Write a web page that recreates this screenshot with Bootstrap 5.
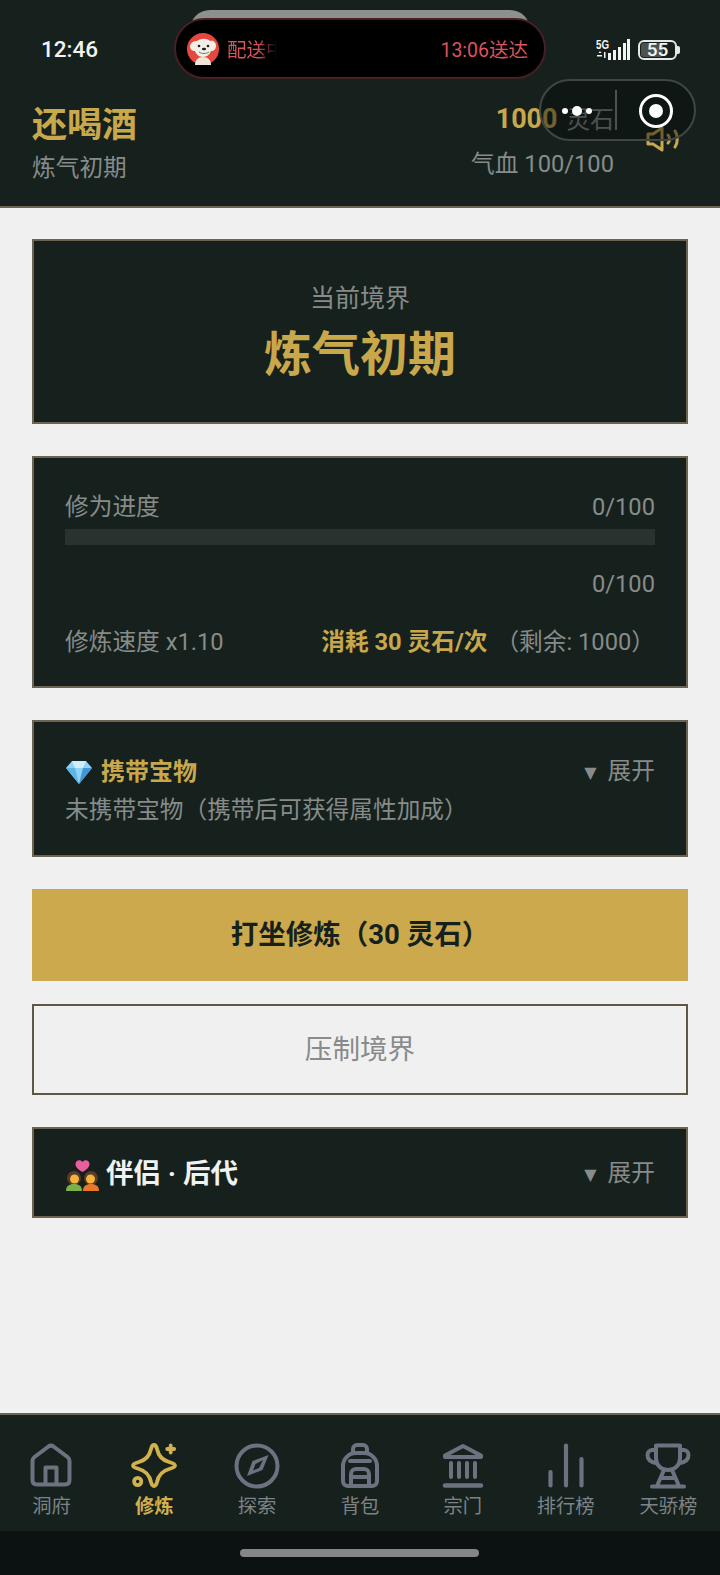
<!DOCTYPE html>
<html lang="zh">
<head>
<meta charset="utf-8">
<title>修炼</title>
<link rel="stylesheet" href="https://cdn.jsdelivr.net/npm/bootstrap@5.3.0/dist/css/bootstrap.min.css">
<style>
html,body{height:100%}
body{width:720px;height:1575px;overflow:hidden;background:#f0f0f0;font-family:Roboto,"Noto Sans CJK SC",sans-serif;color:#878b89}
.shell{height:1575px;position:relative}
.topbar{background:#16211e;border-bottom:2px solid #6b6450;height:208px;padding:0 40px 0 32px;position:relative}
.statusrow{height:99px;padding:0 0 0 9px}
.clock{color:#f2f4f3;font-size:22.5px;font-weight:500;line-height:1}
.batt{width:39px;height:20px;border:2px solid #e6e8e7;border-radius:6px;position:relative;color:#f2f4f3;font-size:19px;line-height:16px;text-align:center;font-weight:500;margin-right:3px}
.batt::before{content:"";position:absolute;left:1px;top:1px;bottom:1px;width:22px;background:#4b5250;border-radius:3px;z-index:0}
.batt::after{content:"";position:absolute;right:-5px;top:4px;width:3px;height:8px;background:#e6e8e7;border-radius:0 2px 2px 0}
.batt b{position:relative;z-index:1;font-weight:500}
.island-back{position:absolute;left:190px;top:10px;width:340px;height:40px;border-radius:20px 20px 0 0;background:#8d908e}
.island{position:absolute;left:174px;top:18px;width:372px;height:61px;background:#000;border:2px solid #4a1f24;border-radius:31px;padding:0 16px 0 11px;color:#d9545b;font-size:19.5px;line-height:1}
.island-txt{padding-top:5px}
.island-fade{white-space:nowrap;padding-top:5px;-webkit-mask-image:linear-gradient(90deg,#000 30px,transparent 50px);mask-image:linear-gradient(90deg,#000 30px,transparent 50px)}
.capsule{position:absolute;left:539px;top:79px;width:157px;height:62px;border-radius:31px;background:rgba(6,10,10,.45);border:2px solid #3f4645}
.capsule-line{width:2px;height:40px;background:#4c5251;position:absolute;left:74px;top:9px}
.who{font-size:35px;font-weight:700;color:#c9a84c;line-height:1.2;margin-top:6px}
.realm{font-size:23.7px;line-height:1.3;margin-top:6px}
.wealth{padding-top:3px;text-align:right}
.stone{font-size:27px;font-weight:700;color:#c9a84c;line-height:1.3}
.stone span{font-size:23.7px;font-weight:400;color:#878b89;margin-left:9px}
.hp{font-size:23.7px;line-height:1.3;margin-top:12px}
.horn{margin:27px 0 0 32px;flex:none}
.stage{padding:31px 32px 0;gap:32px}
.dark-panel{background:#16211e;border:2px solid #6b6450;border-radius:0}
.p-realm{height:185px;padding-top:6px}
.p-realm .lbl{font-size:25px;line-height:1.3}
.p-realm .big{font-size:48px;font-weight:700;color:#c9a84c;line-height:1.3;margin-top:9px}
.p-prog{height:232px;padding:32px 31px 0}
.t25{font-size:23.7px;line-height:34px}
.pb-track{height:16px;background:#28322f;margin-top:5px}
.sp-a{margin-top:22px}
.sp-b{margin-top:24px}
.spent{color:#c9a84c;font-weight:700}
.p-item{height:137px;padding:32px 31px 0}
.p-item .ttl{color:#c9a84c;font-weight:700;font-size:24px;line-height:34px}
.gap-desc{margin-top:3px}
.arrow{font-family:"DejaVu Sans",sans-serif;font-size:16px;margin-right:11px;vertical-align:1px}
.mbtn{height:92px;background:#cba94c;border:0;border-radius:0;color:#16211e;font-size:27.5px;font-weight:700;display:flex;align-items:center;justify-content:center;width:100%}
.mbtn:hover,.mbtn:active{background:#cba94c!important;color:#16211e!important}
.obtn{height:91px;background:transparent;border:2px solid #5d5745;border-radius:0;color:#878b89;font-size:27.6px;display:flex;align-items:center;justify-content:center;width:100%;margin-top:-9px}
.p-mate{height:91px;padding:3px 31px 0}
.mate{color:#f0f2f1;font-size:27.5px;font-weight:700;gap:6px}
.tabs{position:absolute;left:0;right:0;top:1413px;height:118px;background:#16211e;border-top:2px solid #6b6450}
.tabbar{padding-top:28px}
.tabit{width:102.857px;color:#7d8386;font-size:19.3px;line-height:24px}
.tabit svg{display:block;margin-bottom:6px}
.tabit.on{color:#d2b04c;font-weight:700}
.homebar{position:absolute;left:0;right:0;top:1531px;height:44px;background:#0b1211}
.homebar i{display:block;position:absolute;left:240px;top:18px;width:239px;height:8px;background:#858786;border-radius:4px}
</style>
</head>
<body>
<div class="shell">
  <header class="topbar">
    <div class="statusrow d-flex align-items-center justify-content-between">
      <span class="clock">12:46</span>
      <div class="d-flex align-items-center gap-2">
        <svg width="34" height="22" viewBox="0 0 34 22" fill="#f2f4f3">
          <text x="0" y="10" font-family="Liberation Sans" font-weight="700" font-size="12" textLength="13" lengthAdjust="spacingAndGlyphs">5G</text>
          <path d="M1 16h5v1.500H1zM4 12l1.500 2h-3zM8 13v6h1.500v-6z"/>
          <rect x="12" y="14" width="3" height="7"/><rect x="17" y="11" width="3" height="10"/><rect x="22" y="8" width="3" height="13"/><rect x="27" y="4" width="3" height="17"/><rect x="31" y="0" width="3" height="21"/>
        </svg>
        <div class="batt"><b>55</b></div>
      </div>
    </div>
    <div class="d-flex justify-content-between">
      <div>
        <div class="who">还喝酒</div>
        <div class="realm">炼气初期</div>
      </div>
      <div class="d-flex align-items-start">
        <div class="wealth">
          <div class="stone">1000<span>灵石</span></div>
          <div class="hp">气血 100/100</div>
        </div>
        <svg class="horn" width="34" height="26" viewBox="0 0 34 26" fill="none" stroke="#c9a84c" stroke-width="3" stroke-linecap="round" stroke-linejoin="round">
          <path d="M2 8h5l9-6v22l-9-6H2z"/><path d="M22 9c2 2 2 6 0 8"/><path d="M29 5c3 4 3 12 0 16"/>
        </svg>
      </div>
    </div>
    <div class="island-back"></div>
    <div class="island d-flex align-items-center justify-content-between">
      <div class="d-flex align-items-center gap-2">
        <svg width="32" height="32" viewBox="0 0 32 32"><circle cx="16" cy="16" r="16" fill="#e6483d"/><path d="M3 13c1-4 4-5 7-5 4-3 10-3 13 0 3-1 6 1 6 5 0 3-2 5-5 5-1 3-4 6-8 6s-7-3-8-6c-3 0-5-2-5-5z" fill="#f4efe6"/><path d="M8 32c0-5 3-8 8-8s8 3 8 8z" fill="#efe6d8"/><circle cx="12" cy="13" r="1.300" fill="#222"/><circle cx="21" cy="13" r="1.300" fill="#222"/><ellipse cx="17" cy="16" rx="2.200" ry="1.300" fill="#222"/><path d="M12 19c3 2 7 2 10 0" stroke="#3a8f6a" fill="none"/></svg>
        <div class="island-fade">配送中</div>
      </div>
      <div class="island-txt">13:06送达</div>
    </div>
    <div class="capsule">
      <svg class="position-absolute" style="left:18px;top:20px" width="36" height="20" viewBox="0 0 36 20" fill="#fff"><circle cx="6" cy="10" r="3"/><circle cx="18" cy="10" r="5"/><circle cx="30" cy="10" r="3"/></svg>
      <div class="capsule-line"></div>
      <svg class="position-absolute" style="left:97px;top:12px" width="36" height="36" viewBox="0 0 36 36"><circle cx="18" cy="18" r="15.500" fill="none" stroke="#fff" stroke-width="3"/><circle cx="18" cy="18" r="7" fill="#fff"/></svg>
    </div>
  </header>

  <main class="stage d-flex flex-column">
    <section class="dark-panel p-realm d-flex flex-column align-items-center justify-content-center">
      <div class="lbl">当前境界</div>
      <div class="big">炼气初期</div>
    </section>

    <section class="dark-panel p-prog">
      <div class="d-flex justify-content-between t25"><span>修为进度</span><span>0/100</span></div>
      <div class="pb-track"></div>
      <div class="text-end t25 sp-a">0/100</div>
      <div class="d-flex justify-content-between t25 sp-b"><span>修炼速度 x1.10</span><span><span class="spent">消耗 30 灵石/次</span><span class="ms-2">（剩余: 1000）</span></span></div>
    </section>

    <section class="dark-panel p-item">
      <div class="d-flex justify-content-between t25">
        <span class="ttl d-flex align-items-center gap-2">
          <svg width="28" height="26" viewBox="0 0 28 26"><path d="M7 2h14l6 7-13 16L1 9z" fill="#8fd3f4"/><path d="M7 2l3 7h8l3-7z" fill="#cfeefc"/><path d="M1 9h9l4 16z" fill="#5fb4e6"/><path d="M18 9h9l-13 16z" fill="#3f97d8"/></svg>
          携带宝物</span>
        <span><span class="arrow">▼</span>展开</span>
      </div>
      <div class="t25 gap-desc">未携带宝物（携带后可获得属性加成）</div>
    </section>

    <button type="button" class="btn mbtn">打坐修炼（30 灵石）</button>
    <button type="button" class="btn obtn">压制境界</button>

    <section class="dark-panel p-mate d-flex align-items-center justify-content-between">
      <span class="mate d-flex align-items-center">
        <svg width="35" height="34" viewBox="0 0 35 34"><path d="M17.500 15c-5-3-7-5-7-8 0-4 5-5 7-2 2-3 7-2 7 2 0 3-2 5-7 8z" fill="#e6609e"/><circle cx="9" cy="21" r="7" fill="#5b3a26"/><circle cx="26" cy="21" r="7" fill="#5b3a26"/><circle cx="9.500" cy="22" r="4.500" fill="#f3b33e"/><circle cx="25.500" cy="22" r="4.500" fill="#f3b33e"/><path d="M1 34c0-5 3-7 8-7s8 2 8 7z" fill="#7eb04a"/><path d="M18 34c0-5 3-7 8-7s8 2 8 7z" fill="#e8772a"/></svg>
        伴侣 · 后代</span>
      <span class="t25"><span class="arrow">▼</span>展开</span>
    </section>
  </main>

  <nav class="tabs">
    <div class="tabbar d-flex">
      <div class="tabit d-flex flex-column align-items-center">
        <svg width="46" height="46" viewBox="0 0 46 46" fill="none" stroke="#6c7280" stroke-width="4" stroke-linejoin="round" stroke-linecap="round"><path d="M4.500 18Q4.500 15.500 6.500 14L20.500 3.500Q23 1.800 25.500 3.500L39.500 14Q41.500 15.500 41.500 18V37Q41.500 41.500 37 41.500H9Q4.500 41.500 4.500 37Z"/><path d="M17.500 41V24.500H28.500V41"/></svg>
        洞府</div>
      <div class="tabit on d-flex flex-column align-items-center">
        <svg width="46" height="46" viewBox="0 0 46 46" fill="none" stroke="#d2b04c" stroke-width="3.800" stroke-linecap="round" stroke-linejoin="round"><path d="M23 2C25 2 25.500 4 26 6C27.500 13 31 17 38 19C41 20 44 20.500 44 22.500C44 24.500 41 25 38 26C31 28 27.500 32 26 39C25.500 41 25 43 23 43C21 43 20.500 41 20 39C18.500 32 15 28 8 26C5 25 2 24.500 2 22.500C2 20.500 5 20 8 19C15 17 18.500 13 20 6C20.500 4 21 2 23 2Z"/><path d="M39.700 2.500V9.500M36.200 6H43.200"/><circle cx="6.700" cy="38.500" r="3.600"/></svg>
        修炼</div>
      <div class="tabit d-flex flex-column align-items-center">
        <svg width="46" height="46" viewBox="0 0 46 46" fill="none" stroke="#6c7280" stroke-width="4"><circle cx="23" cy="23" r="20.500"/><path d="M34.500 12L28.500 27L13 33L18.500 18Z" fill="#6c7280" stroke="none"/><path d="M29 17L25 25L19 27.500L21.500 21Z" fill="#16211e" stroke="none"/></svg>
        探索</div>
      <div class="tabit d-flex flex-column align-items-center">
        <svg width="46" height="46" viewBox="0 0 46 46" fill="none" stroke="#6c7280" stroke-width="4" stroke-linecap="round" stroke-linejoin="round"><path d="M6 23A13 13 0 0 1 19 10H27A13 13 0 0 1 40 23V38A5 5 0 0 1 35 43H11A5 5 0 0 1 6 38Z"/><path d="M16 10V6A4 4 0 0 1 20 2H26A4 4 0 0 1 30 6V10"/><path d="M13 18H33"/><path d="M14 43V31A5 5 0 0 1 19 26H27A5 5 0 0 1 32 31V43"/><path d="M15 34H31"/></svg>
        背包</div>
      <div class="tabit d-flex flex-column align-items-center">
        <svg width="46" height="46" viewBox="0 0 46 46" fill="none" stroke="#6c7280" stroke-width="4" stroke-linecap="round" stroke-linejoin="round"><path d="M5 12.500L23 3L41 12.500V14H5Z"/><path d="M11 20V34M19 20V34M27 20V34M35 20V34" stroke-width="4"/><path d="M5 42.500H41" stroke-width="4.500"/></svg>
        宗门</div>
      <div class="tabit d-flex flex-column align-items-center">
        <svg width="46" height="46" viewBox="0 0 46 46" fill="none" stroke="#6c7280" stroke-width="4.200" stroke-linecap="round"><path d="M7.500 29V42.500M23 2.500V42.500M38.500 16V42.500"/></svg>
        排行榜</div>
      <div class="tabit d-flex flex-column align-items-center">
        <svg width="46" height="46" viewBox="0 0 46 46" fill="none" stroke="#6c7280" stroke-width="4" stroke-linecap="round" stroke-linejoin="round"><path d="M11 2.500H35V15C35 22 30 27 23 27S11 22 11 15Z"/><path d="M11 7H7A5 5 0 0 0 2.500 12C2.500 16 5.500 19 11 20M35 7H39A5 5 0 0 1 43.500 12C43.500 16 40.500 19 35 20"/><path d="M19 27L12 43M27 27L34 43M7 43.500H39M17 35H29"/></svg>
        天骄榜</div>
    </div>
  </nav>
  <div class="homebar"><i></i></div>
</div>
<script src="https://cdn.jsdelivr.net/npm/bootstrap@5.3.0/dist/js/bootstrap.bundle.min.js"></script>
</body>
</html>
